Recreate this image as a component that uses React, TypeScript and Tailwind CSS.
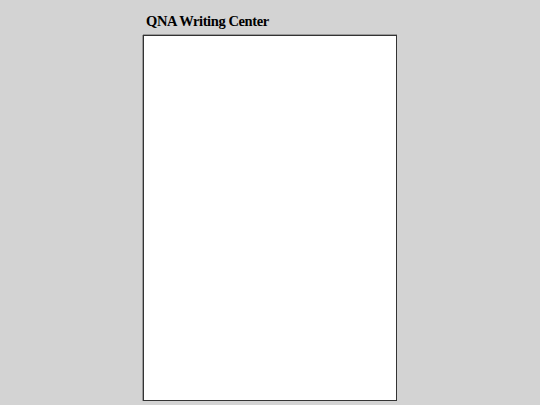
import React from 'react';

export default function App() {
  return (
    <div className="min-h-[405px] w-full bg-[#d3d3d3] font-['Liberation_Serif',serif]">
      <div className="mx-auto w-[254px] pt-[11px]">
        <h1 className="pl-[3px] text-[14.5px] leading-[20px] font-bold tracking-[-0.4px] text-black">QNA Writing Center</h1>
        <textarea
          autoFocus
          className="mt-[4px] block h-[366px] w-[254px] resize-none border border-[#333] bg-white px-[6px] py-[5px] text-[13px] outline-none shadow-[0_-1px_0_#999,-1px_0_0_#999]"
        />
      </div>
    </div>
  );
}
